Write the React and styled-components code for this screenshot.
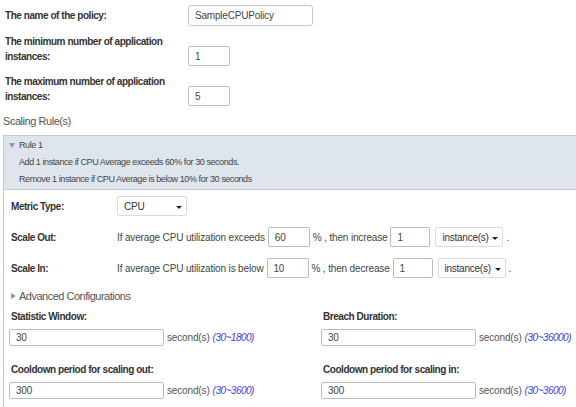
import React from 'react';
import styled, { createGlobalStyle } from 'styled-components';

const GlobalStyle = createGlobalStyle`
html, body {
  margin: 0;
  padding: 0;
  background: #fff;
  overflow: hidden;
}
body {
  font-family: "Liberation Sans", Arial, sans-serif;
  font-size: 10px;
  letter-spacing: -0.15px;
  color: #333;
}
`
const Page = styled.div`
display: flex;
flex-direction: column;
width: 576px;
height: 407px;
padding-top: 5px;
box-sizing: border-box;
overflow: hidden;
`
const TopForm = styled.div`
display: flex;
flex-direction: column;
gap: 8px;
padding-left: 5px;
`
const FieldRow = styled.div`
display: grid;
grid-template-columns: 183px auto;
align-items: ${p => p.$align || 'end'};
`
const FieldLabel = styled.label`
font-weight: bold;
font-size: 10px;
letter-spacing: -0.45px;
line-height: 15px;
padding-bottom: ${p => (p.$flat ? 0 : 2)}px;
color: #333;
`
const TextInput = styled.input`
width: ${p => p.$w}px;
height: ${p => p.$h || 20}px;
box-sizing: border-box;
margin: 0;
border: 1px solid ${p => (p.$soft ? '#c8c8c8' : '#bcbcbc')};
border-radius: ${p => (p.$soft ? 3 : 2)}px;
padding: 0 6px;
font: 10px "Liberation Sans", Arial, sans-serif;
letter-spacing: -0.2px;
color: #444;
background: #fff;
outline: none;
`
const SectionTitle = styled.div`
font-size: 11px;
letter-spacing: -0.45px;
line-height: 16px;
color: #555;
margin: 7px 0 6px 3px;
`
const RuleBox = styled.div`
flex: 1;
margin-left: 3px;
margin-right: -4px;
border-left: 1px solid #c3c9cf;
border-top: 1px solid #c3c9cf;
display: flex;
flex-direction: column;
`
const RuleHeader = styled.div`
background: #dfe5ec;
border-bottom: 1px solid #c3c9cf;
padding: 0 0 1px 5px;
color: #444;
font-size: 9px;
letter-spacing: -0.42px;
`
const RuleTitle = styled.div`
display: flex;
align-items: center;
gap: 4px;
line-height: 18px;
`
const Triangle = styled.span`
display: inline-block;
width: 0;
height: 0;
${p => (p.$dir === 'down'
    ? 'border-left: 3px solid transparent; border-right: 3px solid transparent; border-top: 5px solid #999;'
    : 'border-top: 3px solid transparent; border-bottom: 3px solid transparent; border-left: 5px solid #999;')}
`
const RuleLine = styled.div`
line-height: 17px;
padding-left: 10px;
`
const RuleBody = styled.div`
padding: 6px 0 0 7px;
display: flex;
flex-direction: column;
`
const RuleRows = styled.div`
display: flex;
flex-direction: column;
gap: 11px;
`
const RuleRow = styled.div`
display: grid;
grid-template-columns: 106px auto;
align-items: center;
`
const Inline = styled.div`
display: flex;
align-items: center;
gap: 3px;
color: #444;
`
const SelectBox = styled.div`
display: flex;
align-items: center;
justify-content: space-between;
width: ${p => p.$w}px;
height: 20px;
box-sizing: border-box;
margin-left: ${p => p.$ml || 0}px;
padding: 0 4px 0 6px;
border: 1px solid #dcdcdc;
border-radius: 2px;
background: #fff;
color: #333;
letter-spacing: -0.25px;
`
const Caret = styled.span`
width: 0;
height: 0;
margin-top: 2px;
border-left: 3px solid transparent;
border-right: 3px solid transparent;
border-top: 3px solid #222;
`
const AdvancedToggle = styled.div`
display: flex;
align-items: center;
gap: 3px;
margin-top: 10px;
font-size: 11px;
letter-spacing: -0.5px;
line-height: 16px;
color: #555;
`
const AdvancedGrid = styled.div`
display: grid;
grid-template-columns: 312px auto;
row-gap: 16px;
margin-top: 5px;
`
const AdvancedField = styled.div`
display: flex;
flex-direction: column;
gap: 5px;
`
const InputLine = styled.div`
display: flex;
align-items: center;
gap: 3px;
margin-left: -2px;
color: #555;
`
const Hint = styled.span`
font-style: italic;
letter-spacing: -0.5px;
color: #3b3bef;
`

const advanced = [
  { label: 'Statistic Window:', value: '30', range: '(30~1800)' },
  { label: 'Breach Duration:', value: '30', range: '(30~36000)' },
  { label: 'Cooldown period for scaling out:', value: '300', range: '(30~3600)' },
  { label: 'Cooldown period for scaling in:', value: '300', range: '(30~3600)' },
];

export default function App() {
  return (
    <Page>
      <GlobalStyle />
      <TopForm>
        <FieldRow $align="center">
          <FieldLabel $flat>The name of the policy:</FieldLabel>
          <TextInput $w={125} $h={21} $soft defaultValue="SampleCPUPolicy" />
        </FieldRow>
        <FieldRow>
          <FieldLabel>The minimum number of application<br />instances:</FieldLabel>
          <TextInput $w={42} defaultValue="1" />
        </FieldRow>
        <FieldRow>
          <FieldLabel>The maximum number of application<br />instances:</FieldLabel>
          <TextInput $w={42} defaultValue="5" />
        </FieldRow>
      </TopForm>

      <SectionTitle>Scaling Rule(s)</SectionTitle>

      <RuleBox>
        <RuleHeader>
          <RuleTitle><Triangle $dir="down" />Rule 1</RuleTitle>
          <RuleLine>Add 1 instance if CPU Average exceeds 60% for 30 seconds.</RuleLine>
          <RuleLine>Remove 1 instance if CPU Average is below 10% for 30 seconds</RuleLine>
        </RuleHeader>
        <RuleBody>
          <RuleRows>
            <RuleRow>
              <FieldLabel $flat>Metric Type:</FieldLabel>
              <SelectBox $w={70}>CPU<Caret /></SelectBox>
            </RuleRow>
            <RuleRow>
              <FieldLabel $flat>Scale Out:</FieldLabel>
              <Inline>
                If average CPU utilization exceeds
                <TextInput $w={42} defaultValue="60" />
                % , then increase
                <TextInput $w={40} defaultValue="1" />
                <SelectBox $w={68} $ml={2}>instance(s)<Caret /></SelectBox>
                .
              </Inline>
            </RuleRow>
            <RuleRow>
              <FieldLabel $flat>Scale In:</FieldLabel>
              <Inline>
                If average CPU utilization is below
                <TextInput $w={42} defaultValue="10" />
                % , then decrease
                <TextInput $w={40} defaultValue="1" />
                <SelectBox $w={68} $ml={2}>instance(s)<Caret /></SelectBox>
                .
              </Inline>
            </RuleRow>
          </RuleRows>

          <AdvancedToggle><Triangle $dir="right" />Advanced Configurations</AdvancedToggle>

          <AdvancedGrid>
            {advanced.map(f => (
              <AdvancedField key={f.label}>
                <FieldLabel $flat>{f.label}</FieldLabel>
                <InputLine>
                  <TextInput $w={155} $h={17} defaultValue={f.value} />
                  second(s) <Hint>{f.range}</Hint>
                </InputLine>
              </AdvancedField>
            ))}
          </AdvancedGrid>
        </RuleBody>
      </RuleBox>
    </Page>
  );
}
